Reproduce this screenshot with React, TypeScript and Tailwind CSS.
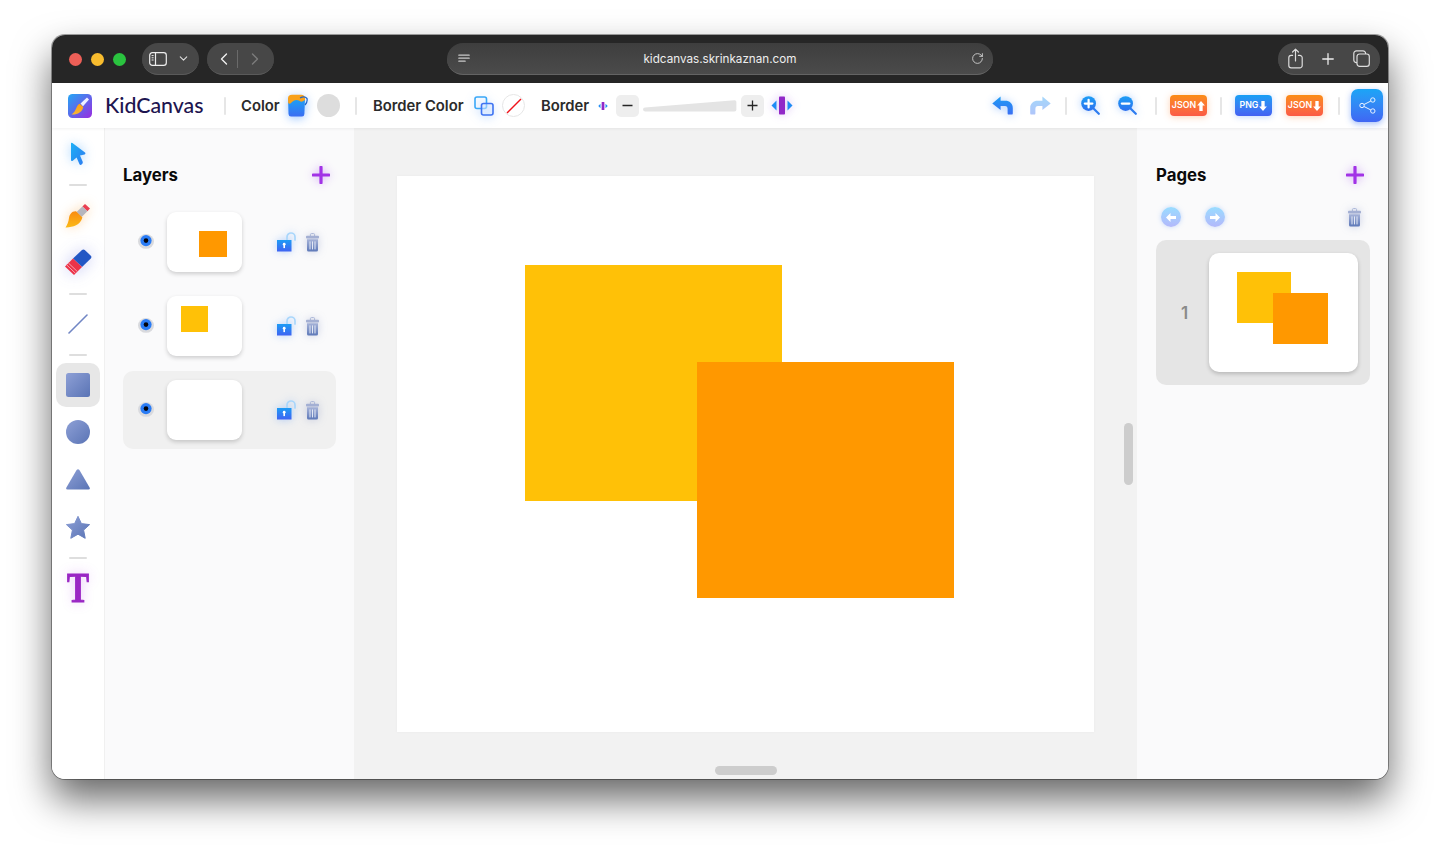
import { ChevronDown, ChevronLeft, ChevronRight, Plus, RotateCw } from "lucide-react";

const sans = { fontFamily: "Inter, 'Noto Sans', sans-serif" };

function Divider() {
    return <div className="w-[2px] h-[18px] bg-[#e6e6e6] rounded-full" />;
}

function RailDivider({ className }: { className: string }) {
    return <div className={`w-[18px] h-[2px] bg-[#dedede] rounded-full ${className}`} />;
}

function Lights() {
    return (
        <div className="flex items-center gap-[9px] ml-[16.5px]">
            <div className="w-[13px] h-[13px] rounded-full bg-[#ed5f57]" />
            <div className="w-[13px] h-[13px] rounded-full bg-[#f8bc2e]" />
            <div className="w-[13px] h-[13px] rounded-full bg-[#2ac33f]" />
        </div>
    );
}

function SidebarIcon() {
    return (
        <svg width="18" height="14" viewBox="0 0 18 14" fill="none" stroke="#eee" strokeWidth="1.2">
            <rect x="0.7" y="0.7" width="16.6" height="12.6" rx="2.6" />
            <path d="M6.5 .7v12.6" />
            <path d="M2.6 3.6h2M2.6 5.8h2M2.6 8h2" strokeWidth="1" />
        </svg>
    );
}

function ReaderIcon() {
    return (
        <svg width="12" height="10" viewBox="0 0 12 10" fill="none" stroke="#c9c9c9" strokeWidth="1.2" strokeLinecap="round">
            <path d="M.8 1.2h10.4M.8 4.2h10.4M.8 7.2h6.4" />
        </svg>
    );
}

function ShareBoxIcon() {
    return (
        <svg width="15" height="21" viewBox="0 0 15 21" fill="none" stroke="#ddd" strokeWidth="1.2" strokeLinecap="round" strokeLinejoin="round">
            <path d="M4.6 7.4H3.2A2.4 2.4 0 0 0 .8 9.8v7.6a2.4 2.4 0 0 0 2.4 2.4h8.6a2.4 2.4 0 0 0 2.4-2.4V9.8a2.4 2.4 0 0 0-2.4-2.4h-1.4" />
            <path d="M7.5 13V1.2M4.6 4l2.9-2.9L10.4 4" />
        </svg>
    );
}

function TabsIcon() {
    return (
        <svg width="17" height="17" viewBox="0 0 17 17" fill="none" stroke="#ddd" strokeWidth="1.2">
            <rect x="4" y="4" width="12.3" height="12.3" rx="2.6" />
            <path d="M4 12.6h-.6A2.6 2.6 0 0 1 .8 10V3.4A2.6 2.6 0 0 1 3.4.8H10a2.6 2.6 0 0 1 2.6 2.6V4" />
        </svg>
    );
}

function TitleBar() {
    return (
        <div className="h-[48px] shrink-0 bg-[#262626] flex items-center relative">
            <Lights />
            <div className="ml-[16.5px] w-[57px] h-[32px] rounded-full bg-[#474747] border-b border-[#5a5a5a] flex items-center pl-[7px] gap-[10px]">
                <SidebarIcon />
                <ChevronDown size={13} color="#ddd" strokeWidth={2} />
            </div>
            <div className="ml-[8px] w-[67px] h-[32px] rounded-full bg-[#474747] border-b border-[#5a5a5a] flex items-center pl-[7px]">
                <ChevronLeft size={20} color="#f2f2f2" strokeWidth={1.6} />
                <div className="w-px h-[18px] bg-[#6a6a6a] ml-[3px] mr-[7px]" />
                <ChevronRight size={20} color="#7c7c7c" strokeWidth={1.6} />
            </div>
            <div className="ml-[173px] w-[546px] h-[32px] rounded-full bg-gradient-to-b from-[#3e3e3e] to-[#4b4b4b] border-b border-[#646464] flex items-center justify-between pl-[11px] pr-[9px]">
                <ReaderIcon />
                <span className="text-[11.7px] text-[#eeeeee] mr-[1px] mt-[2px]" style={sans}>kidcanvas.skrinkaznan.com</span>
                <RotateCw size={13} color="#d6d6d6" strokeWidth={1.6} />
            </div>
            <div className="ml-[285px] w-[102px] h-[32px] rounded-full bg-[#474747] border-b border-[#5a5a5a] flex items-center pl-[10px]">
                <ShareBoxIcon />
                <Plus size={18} color="#eee" strokeWidth={1.7} className="ml-[16px]" />
                <span className="ml-[16px]"><TabsIcon /></span>
            </div>
        </div>
    );
}

function Logo() {
    return (
        <svg width="24" height="24" viewBox="0 0 24 24">
            <defs>
                <linearGradient id="logoBg" x1="0" y1="0" x2="1" y2="1">
                    <stop offset="0" stopColor="#22a7f5" />
                    <stop offset="1" stopColor="#9a2be0" />
                </linearGradient>
                <linearGradient id="logoTip" x1="0" y1="0" x2="0" y2="1">
                    <stop offset="0" stopColor="#ffa011" />
                    <stop offset="1" stopColor="#f5b53a" />
                </linearGradient>
            </defs>
            <rect width="24" height="24" rx="4.5" fill="url(#logoBg)" />
            <path d="M12.5 9.5 L19 3.4 L21 5.4 L15 12.2 Z" fill="#eef0ff" />
            <path d="M11.6 9.8 C8 11 9 17 3.5 20.5 C9 21 14.5 18 15.2 13 Z" fill="url(#logoTip)" />
        </svg>
    );
}

function Bucket() {
    return (
        <svg width="21" height="23" viewBox="0 0 21 23" className="drop-shadow-[0_2px_5px_rgba(40,130,255,0.45)]">
            <defs>
                <linearGradient id="bucketBody" x1="0" y1="0" x2="0" y2="1">
                    <stop offset="0" stopColor="#1ba4f5" />
                    <stop offset="1" stopColor="#3a6cf2" />
                </linearGradient>
            </defs>
            <path d="M1 4 H18 L17.4 20 Q17.2 22.6 15 22.6 H4 Q1.8 22.6 1.5 20 Z" fill="url(#bucketBody)" />
            <path d="M1 4.5 Q1 .8 5 .8 H14 Q18 .8 18 4.5 L18 6 Q14 9 12 6.5 Q8 5 5 8 Q3 11 1.2 9 Z" fill="#f9a11b" />
            <path d="M13 4 Q17.5 1.5 20 4.5 Q20.8 8 18 11" fill="none" stroke="#1c63c9" strokeWidth="1.2" />
        </svg>
    );
}

function CopyBorder() {
    return (
        <svg width="20" height="20" viewBox="0 0 20 20" fill="none" className="drop-shadow-[0_2px_5px_rgba(40,130,255,0.3)]">
            <rect x="1" y="1" width="11.5" height="11.5" rx="2" stroke="#3aa8f8" strokeWidth="1.6" />
            <rect x="7.5" y="7.5" width="11.5" height="11.5" rx="2" stroke="#3f74f2" strokeWidth="1.6" fill="#dbeaff" fillOpacity="0.5" />
        </svg>
    );
}

function BorderWidthIcon({ size }: { size: "sm" | "lg" }) {
    const lg = size === "lg";
    return (
        <svg width={lg ? 22 : 10} height={lg ? 19 : 10} viewBox="0 0 22 19" className={lg ? "drop-shadow-[0_0_5px_rgba(140,60,230,0.35)]" : ""}>
            <path d="M5.5 4.5 V14.5 L0.5 9.5 Z" fill="#1f8cf5" />
            <path d="M16.5 4.5 V14.5 L21.5 9.5 Z" fill="#1f8cf5" />
            <rect x="8" y="0.5" width="6" height="18" rx="0.8" fill="#9128c8" />
        </svg>
    );
}

function Wedge() {
    return (
        <svg width="94" height="12" viewBox="0 0 94 12">
            <path d="M2 7.4 L91.5 0.2 Q93.4 0.1 93.4 2 V9.4 Q93.4 11.4 91.5 11.4 H2 Q0 11 0 9.4 Q0 7.6 2 7.4 Z" fill="#e4e4e4" />
        </svg>
    );
}

function SmallKey({ sign }: { sign: "-" | "+" }) {
    return (
        <div className="w-[23px] h-[22px] rounded-[5px] bg-[#eeeeee] flex items-center justify-center">
            <svg width="11" height="11" viewBox="0 0 11 11" stroke="#262626" strokeWidth="1.3">
                <path d="M.5 5.5h10" />
                {sign === "+" && <path d="M5.5 .5v10" />}
            </svg>
        </div>
    );
}

function Undo({ redo }: { redo?: boolean }) {
    return (
        <svg width="21" height="19" viewBox="0 0 21 19" className={redo ? "opacity-40 -scale-x-100" : "drop-shadow-[0_1px_4px_rgba(30,120,250,0.4)]"}>
            <defs>
                <linearGradient id={redo ? "redoFill" : "undoFill"} x1="0" y1="0" x2="0" y2="1">
                    <stop offset="0" stopColor="#1d9df5" />
                    <stop offset="1" stopColor="#3b6ff3" />
                </linearGradient>
            </defs>
            <path d="M8.6 .4 L.3 7.4 L8.6 14 V10 H13 C14.8 10 15.6 11 15.6 13 V17.4 Q15.6 18.6 17 18.6 H19.4 Q20.8 18.6 20.8 17.4 V12 C20.8 7.4 17.4 4.8 13.4 4.8 H8.6 Z" fill={`url(#${redo ? "redoFill" : "undoFill"})`} />
        </svg>
    );
}

function Zoom({ minus }: { minus?: boolean }) {
    const id = minus ? "zoomOut" : "zoomIn";
    return (
        <svg width="19" height="19" viewBox="0 0 19 19" className="drop-shadow-[0_0_4px_rgba(30,120,250,0.35)]">
            <defs>
                <linearGradient id={id} x1="0" y1="0" x2="0" y2="1">
                    <stop offset="0" stopColor="#1c9ef5" />
                    <stop offset="1" stopColor="#2d6fee" />
                </linearGradient>
            </defs>
            <path d="M11.5 11.5 L17.8 17.8" stroke="#2d7cf0" strokeWidth="2.2" strokeLinecap="round" />
            <circle cx="7.6" cy="7.6" r="7.4" fill={`url(#${id})`} />
            <path d="M3.8 7.6h7.6" stroke="#fff" strokeWidth="2.2" strokeLinecap="round" />
            {!minus && <path d="M7.6 3.8v7.6" stroke="#fff" strokeWidth="2.2" strokeLinecap="round" />}
        </svg>
    );
}

function FileButton({ label, up, blue, className }: { label: string; up?: boolean; blue?: boolean; className?: string }) {
    const tone = blue
        ? "bg-gradient-to-b from-[#159ff5] to-[#4360f2] shadow-[0_1px_6px_rgba(50,120,250,0.3)]"
        : "bg-gradient-to-b from-[#fb8c12] to-[#fb5a45] shadow-[0_1px_7px_rgba(250,130,50,0.35)]";
    return (
        <div className={`w-[37px] h-[21px] rounded-[4px] flex items-center justify-center gap-[1px] ${tone} ${className ?? ""}`}>
            <span className="text-[8.8px] font-semibold text-white leading-none" style={sans}>{label}</span>
            <svg width="8" height="10" viewBox="0 0 7 9" className={up ? "" : "rotate-180"} fill="#fff">
                <path d="M3.5 0 L7 4 H5 V9 H2 V4 H0 Z" />
            </svg>
        </div>
    );
}

function ShareSquare() {
    return (
        <div className="ml-[11px] w-[32px] h-[33px] rounded-[7px] bg-gradient-to-b from-[#1aa5f6] to-[#3f66f3] shadow-[0_2px_6px_rgba(50,110,240,0.45)] flex items-center justify-center">
            <svg width="17" height="17" viewBox="0 0 17 17" fill="none" stroke="#e8f2ff" strokeWidth="1">
                <circle cx="13.8" cy="3" r="2.2" />
                <circle cx="13.8" cy="14" r="2.2" />
                <circle cx="3" cy="8.5" r="2.2" />
                <path d="M5 7.5l6.9-3.5M5 9.5l6.9 3.5" />
            </svg>
        </div>
    );
}

function Toolbar() {
    const label = "text-[14.8px] font-semibold text-[#2b2b2b] leading-none whitespace-nowrap mt-[1px]";
    return (
        <div className="h-[45px] shrink-0 bg-white flex items-center pl-[16px] relative z-10 shadow-[0_1px_3px_rgba(0,0,0,0.06)]" style={sans}>
            <Logo />
            <span className="ml-[13px] w-[99px] text-[21.3px] text-[#1e1550] leading-none font-medium whitespace-nowrap mt-[1px]" style={{ fontFamily: "Lato, sans-serif" }}>KidCanvas</span>
            <div className="ml-[20px]"><Divider /></div>
            <span className={`ml-[15px] w-[38px] ${label}`}>Color</span>
            <div className="ml-[8px]"><Bucket /></div>
            <div className="ml-[9px] w-[23px] h-[23px] rounded-full bg-[#dddddd]" />
            <div className="ml-[15px]"><Divider /></div>
            <span className={`ml-[16px] w-[91px] ${label}`}>Border Color</span>
            <div className="ml-[10px]"><CopyBorder /></div>
            <div className="ml-[8px] w-[23px] h-[23px] rounded-full border border-[#e6e6e6] flex items-center justify-center">
                <svg width="18" height="18" viewBox="0 0 18 18"><path d="M2 16 L16 2" stroke="#f0131b" strokeWidth="1.5" /></svg>
            </div>
            <span className={`ml-[16px] w-[49px] ${label}`}>Border</span>
            <div className="ml-[8px]"><BorderWidthIcon size="sm" /></div>
            <div className="ml-[8px]"><SmallKey sign="-" /></div>
            <div className="ml-[4px] mt-[1px]"><Wedge /></div>
            <div className="ml-[4px]"><SmallKey sign="+" /></div>
            <div className="ml-[7px]"><BorderWidthIcon size="lg" /></div>
            <div className="ml-[199px]"><Undo /></div>
            <div className="ml-[17px]"><Undo redo /></div>
            <div className="ml-[14px]"><Divider /></div>
            <div className="ml-[14px]"><Zoom /></div>
            <div className="ml-[18px]"><Zoom minus /></div>
            <div className="ml-[18px]"><Divider /></div>
            <FileButton label="JSON" up className="ml-[13px]" />
            <div className="ml-[13px]"><Divider /></div>
            <FileButton label="PNG" blue className="ml-[13px]" />
            <FileButton label="JSON" className="ml-[14px]" />
            <div className="ml-[15px]"><Divider /></div>
            <ShareSquare />
        </div>
    );
}

function ArrowTool() {
    return (
        <svg width="16" height="24" viewBox="0 0 16 24" className="drop-shadow-[0_0_6px_rgba(40,150,250,0.4)]">
            <defs>
                <linearGradient id="arrowFill" x1="0" y1="0" x2="1" y2="1">
                    <stop offset="0" stopColor="#1cb0f6" />
                    <stop offset="1" stopColor="#2e7af0" />
                </linearGradient>
            </defs>
            <path d="M1 1.6 Q1 .2 2.4 1 L15 10.6 Q16 12 14.6 12.4 L10 13.4 L12.8 20 Q13 21.4 11.6 22.6 Q10 23.4 9.4 22 L6.6 15.4 L2.8 18.8 Q1 19.6 1 18 Z" fill="url(#arrowFill)" />
        </svg>
    );
}

function BrushTool() {
    return (
        <svg width="26" height="25" viewBox="0 0 26 25" className="drop-shadow-[0_0_6px_rgba(250,150,30,0.35)]">
            <defs>
                <linearGradient id="brushTip" x1="0" y1="0" x2="0" y2="1">
                    <stop offset="0" stopColor="#f98b11" />
                    <stop offset="1" stopColor="#fbb916" />
                </linearGradient>
            </defs>
            <path d="M20 1 L25 5.6 L22.4 8.2 L17.4 3.6 Z" fill="#ea3f50" />
            <path d="M17.4 3.6 L22.4 8.2 L16.6 14 L11.6 9 Z" fill="#b6b6bd" />
            <path d="M11 8.2 C6.5 8 4.5 11.5 4 15 C3.6 19 2.2 22 .5 24.4 C7 24.6 15.4 22.6 17.4 14.6 Z" fill="url(#brushTip)" />
        </svg>
    );
}

function EraserTool() {
    return (
        <svg width="28" height="27" viewBox="0 0 28 27" className="drop-shadow-[0_0_8px_rgba(70,80,220,0.3)]">
            <path d="M18 1 Q19.4 -.2 20.8 1 L26.8 6.8 Q28 8 26.8 9.4 L18 18 L9 9.4 Z" fill="#2257c4" />
            <path d="M9 9.4 L18 18 L10 26 L1 17.4 Z" fill="#ec3349" />
            <path d="M2.6 15.8 L11.6 24.4 M4.4 14 L13.4 22.6" stroke="#f7a3ae" strokeWidth="1" />
        </svg>
    );
}

function ShapeDefs({ id }: { id: string }) {
    return (
        <defs>
            <linearGradient id={id} x1="0" y1="0" x2="1" y2="1">
                <stop offset="0" stopColor="#8ea0d6" />
                <stop offset="1" stopColor="#5a74b5" />
            </linearGradient>
        </defs>
    );
}

function Rail() {
    const box = "w-[44px] h-[44px] flex items-center justify-center rounded-[10px]";
    return (
        <div className="w-[53px] shrink-0 bg-white flex flex-col items-center border-r border-[#f0f0f0]">
            <div className={`${box} mt-[4px]`}><ArrowTool /></div>
            <RailDivider className="mt-[8px]" />
            <div className={`${box} mt-[7px]`}><BrushTool /></div>
            <div className={`${box} mt-[3px]`}><EraserTool /></div>
            <RailDivider className="mt-[9px]" />
            <div className={`${box} mt-[7px]`}>
                <svg width="20" height="20" viewBox="0 0 20 20">
                    <path d="M1 19 L19 1" stroke="#7186c4" strokeWidth="1.6" strokeLinecap="round" />
                </svg>
            </div>
            <RailDivider className="mt-[8px]" />
            <div className={`${box} mt-[7px] bg-[#e7e7e7]`}>
                <svg width="24" height="24" viewBox="0 0 24 24">
                    <ShapeDefs id="squareFill" />
                    <rect width="24" height="24" rx="2.5" fill="url(#squareFill)" />
                </svg>
            </div>
            <div className={`${box} mt-[3px]`}>
                <svg width="24" height="24" viewBox="0 0 24 24">
                    <ShapeDefs id="circleFill" />
                    <circle cx="12" cy="12" r="12" fill="url(#circleFill)" />
                </svg>
            </div>
            <div className={`${box} mt-[3px]`}>
                <svg width="24" height="21" viewBox="0 0 24 21">
                    <ShapeDefs id="triFill" />
                    <path d="M10.6 1 Q12 -.4 13.4 1 L23.6 18.4 Q24.6 20.6 22.4 20.6 H1.6 Q-.6 20.6 .4 18.4 Z" fill="url(#triFill)" />
                </svg>
            </div>
            <div className={`${box} mt-[4px]`}>
                <svg width="24" height="23" viewBox="0 0 24 23">
                    <ShapeDefs id="starFill" />
                    <path d="M12 .3 L15.4 7.6 L23.6 8.6 L17.6 14.1 L19.2 22.3 L12 18.2 L4.8 22.3 L6.4 14.1 L.4 8.6 L8.6 7.6 Z" fill="url(#starFill)" stroke="url(#starFill)" strokeLinejoin="round" />
                </svg>
            </div>
            <RailDivider className="mt-[8px]" />
            <div className={`${box} mt-[7px] text-[33px] font-bold leading-none text-[#9a27c4] scale-y-[1.27] [-webkit-text-stroke:0.8px_#9a27c4] [text-shadow:0_0_10px_rgba(170,60,230,0.35)]`} style={{ fontFamily: "'Liberation Serif', serif" }}>T</div>
        </div>
    );
}

function AddIcon() {
    return (
        <svg width="18" height="18" viewBox="0 0 18 18" className="drop-shadow-[0_0_5px_rgba(150,50,240,0.45)]">
            <path d="M9 1.2v15.6M1.2 9h15.6" stroke="#a233e6" strokeWidth="3.2" strokeLinecap="round" />
        </svg>
    );
}

function Eye() {
    return (
        <svg width="16" height="16" viewBox="0 0 16 16">
            <ellipse cx="8" cy="8.4" rx="8" ry="7.4" fill="#d9dade" />
            <circle cx="8" cy="7.6" r="5.6" fill="#2a7cf5" />
            <circle cx="8" cy="7.6" r="2.3" fill="#04040a" />
        </svg>
    );
}

function Lock() {
    return (
        <svg width="19" height="20" viewBox="0 0 19 20" className="drop-shadow-[0_0_4px_rgba(50,130,250,0.35)]">
            <defs>
                <linearGradient id="lockBody" x1="0" y1="0" x2="0" y2="1">
                    <stop offset="0" stopColor="#1d9cf5" />
                    <stop offset="1" stopColor="#3f63f2" />
                </linearGradient>
            </defs>
            <path d="M10 8.5 V5 A4 4 0 0 1 18 5 V8" fill="none" stroke="#a9d6fb" strokeWidth="1.7" strokeLinecap="round" />
            <rect x="0" y="8" width="14.5" height="11.5" fill="url(#lockBody)" />
            <circle cx="7.2" cy="12.2" r="1.4" fill="#fff" />
            <rect x="6.4" y="12.5" width="1.6" height="3.6" fill="#fff" />
        </svg>
    );
}

function Trash() {
    return (
        <svg width="13" height="19" viewBox="0 0 13 19" className="drop-shadow-[0_0_4px_rgba(90,110,180,0.3)]">
            <defs>
                <linearGradient id="trashBody" x1="0" y1="0" x2="0" y2="1">
                    <stop offset="0" stopColor="#a6b3d8" />
                    <stop offset="1" stopColor="#5d78b8" />
                </linearGradient>
            </defs>
            <path d="M4.4 3V1.6Q4.4 .6 5.4 .6H7.6Q8.6 .6 8.6 1.6V3" fill="none" stroke="#a9b4d6" strokeWidth="1" />
            <rect x="0" y="2.8" width="13" height="2.6" rx="1" fill="#a3afd3" />
            <path d="M1 6.2H12V17Q12 18.6 10.4 18.6H2.6Q1 18.6 1 17Z" fill="url(#trashBody)" />
            <path d="M4 8.4V16.4M6.5 8.4V16.4M9 8.4V16.4" stroke="#e3e8f5" strokeWidth="1" />
        </svg>
    );
}

function LayerRow({ selected, children }: { selected?: boolean; children?: React.ReactNode }) {
    return (
        <div className={`h-[78px] rounded-[10px] flex items-center pl-[15px] ${selected ? "bg-[#f0f0f0]" : ""}`}>
            <div className="mb-[3px]"><Eye /></div>
            <div className="ml-[13px] relative w-[75px] h-[60px] rounded-[9px] bg-white shadow-[0_2px_4px_rgba(0,0,0,0.18)]">
                {children}
            </div>
            <div className="ml-[35px]"><Lock /></div>
            <div className="ml-[10px]"><Trash /></div>
        </div>
    );
}

function LayersPanel() {
    return (
        <div className="w-[250px] shrink-0 bg-[#fafafb] pl-[18px] pr-[18px] pt-[37px] border-r border-[#f2f2f2]">
            <div className="flex items-center justify-between pr-[6px]">
                <h2 className="text-[16.8px] font-bold text-[#0a0a0a] leading-[20px]" style={sans}>Layers</h2>
                <AddIcon />
            </div>
            <div className="mt-[18px] flex flex-col gap-[6px]">
                <LayerRow>
                    <div className="absolute left-[32px] top-[19px] w-[28px] h-[25.5px] bg-[#ff9800]" />
                </LayerRow>
                <LayerRow>
                    <div className="absolute left-[13.5px] top-[10px] w-[27.5px] h-[25.5px] bg-[#ffc107]" />
                </LayerRow>
                <LayerRow selected />
            </div>
        </div>
    );
}

function CanvasArea() {
    return (
        <div className="w-[782px] shrink-0 relative bg-[#f2f2f2] pl-[42px] pt-[48px]">
            <div className="relative w-[697px] h-[556px] bg-white shadow-[0_0_3px_rgba(0,0,0,0.04)]">
                <div className="absolute left-[128px] top-[89px] w-[257px] h-[236px] bg-[#ffc107]" />
                <div className="absolute left-[300px] top-[186px] w-[257px] h-[236px] bg-[#ff9800]" />
            </div>
            <div className="absolute left-[769px] top-[295px] w-[9px] h-[62px] rounded-full bg-[#cdcdcd]" />
            <div className="absolute left-[360px] top-[638px] w-[62px] h-[9px] rounded-full bg-[#cdcdcd]" />
        </div>
    );
}

function PageArrow({ right }: { right?: boolean }) {
    return (
        <div className="w-[20px] h-[20px] rounded-full bg-gradient-to-b from-[#98dcff] to-[#b2b8fb] shadow-[0_0_5px_rgba(120,170,250,0.4)] flex items-center justify-center">
            <svg width="10" height="9" viewBox="0 0 10 9" fill="#fff" className={right ? "" : "rotate-180"}>
                <path d="M5.5 0 L10 4.5 L5.5 9 V6 H0 V3 H5.5 Z" />
            </svg>
        </div>
    );
}

function PagesPanel() {
    return (
        <div className="flex-1 bg-[#fafafb] pl-[19px] pr-[18px] pt-[37px]">
            <div className="flex items-center justify-between pr-[6px]">
                <h2 className="text-[16.8px] font-bold text-[#0a0a0a] leading-[20px]" style={sans}>Pages</h2>
                <AddIcon />
            </div>
            <div className="mt-[22px] h-[20px] flex items-center pl-[5px] pr-[9px]">
                <PageArrow />
                <div className="ml-[24px]"><PageArrow right /></div>
                <div className="ml-auto"><Trash /></div>
            </div>
            <div className="mt-[13px] h-[145px] rounded-[10px] bg-[#e5e5e5] flex items-center pl-[25px]">
                <span className="w-[28px] text-[17px] font-semibold text-[#8a8a8a] mt-[2px]" style={sans}>1</span>
                <div className="relative w-[149px] h-[119px] rounded-[10px] bg-white shadow-[0_2px_4px_rgba(0,0,0,0.2)]">
                    <div className="absolute left-[28px] top-[19px] w-[54px] h-[50.5px] bg-[#ffc107]" />
                    <div className="absolute left-[64px] top-[40px] w-[55px] h-[50.5px] bg-[#ff9800]" />
                </div>
            </div>
        </div>
    );
}

export default function App() {
    return (
        <div className="w-[1440px] h-[848px] bg-white pl-[52px] pt-[35px] overflow-hidden">
            <div className="w-[1336px] h-[744px] rounded-[13px] overflow-hidden flex flex-col bg-white shadow-[0_0_0_1px_rgba(0,0,0,0.35),0_20px_38px_rgba(0,0,0,0.6)]">
                <TitleBar />
                <Toolbar />
                <div className="flex-1 flex min-h-0">
                    <Rail />
                    <LayersPanel />
                    <CanvasArea />
                    <PagesPanel />
                </div>
            </div>
        </div>
    );
}
